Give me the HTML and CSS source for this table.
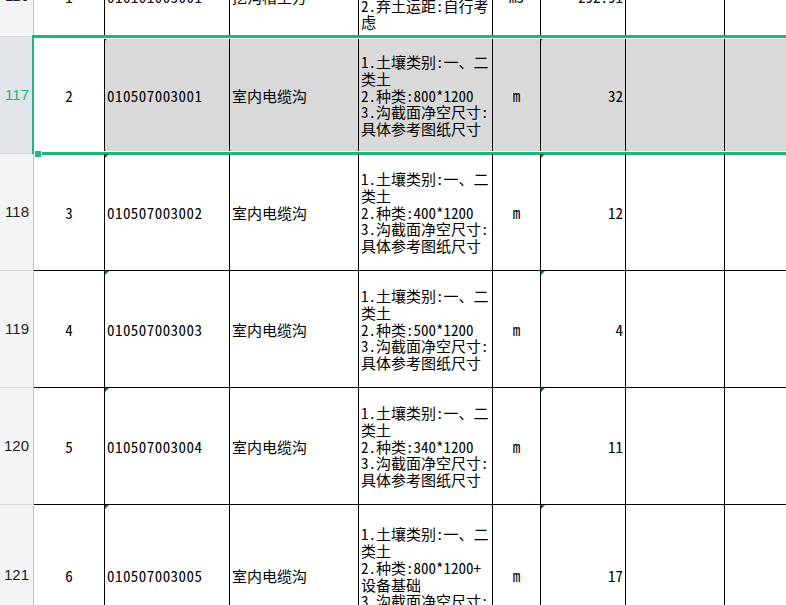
FILE: index.html
```html
<!DOCTYPE html>
<html lang="zh">
<head>
<meta charset="utf-8">
<title>Sheet</title>
<link rel="stylesheet" href="styles.css">
</head>
<body>
<div class="sheet">
  <div class="row r116">
    <div class="rh">116</div>
    <div class="c ca">1</div>
    <div class="c cb tri">010101003001</div>
    <div class="c cc">挖沟槽土方</div>
    <div class="c cd">1.挖土深度:详见图<br>纸<br>2.弃土运距:自行考<br>虑</div>
    <div class="c ce">m3</div>
    <div class="c cf tri">292.91</div>
    <div class="c"></div>
    <div class="c"></div>
  </div>
  <div class="row sel">
    <div class="rh">117</div>
    <div class="c ca">2</div>
    <div class="c cb tri">010507003001</div>
    <div class="c cc">室内电缆沟</div>
    <div class="c cd">1.土壤类别:一、二<br>类土<br>2.种类:800*1200<br>3.沟截面净空尺寸:<br>具体参考图纸尺寸</div>
    <div class="c ce">m</div>
    <div class="c cf tri">32</div>
    <div class="c"></div>
    <div class="c"></div>
    <div class="selbox"></div>
    <div class="handle"></div>
  </div>
  <div class="row">
    <div class="rh">118</div>
    <div class="c ca">3</div>
    <div class="c cb tri">010507003002</div>
    <div class="c cc">室内电缆沟</div>
    <div class="c cd">1.土壤类别:一、二<br>类土<br>2.种类:400*1200<br>3.沟截面净空尺寸:<br>具体参考图纸尺寸</div>
    <div class="c ce">m</div>
    <div class="c cf tri">12</div>
    <div class="c"></div>
    <div class="c"></div>
  </div>
  <div class="row">
    <div class="rh">119</div>
    <div class="c ca">4</div>
    <div class="c cb tri">010507003003</div>
    <div class="c cc">室内电缆沟</div>
    <div class="c cd">1.土壤类别:一、二<br>类土<br>2.种类:500*1200<br>3.沟截面净空尺寸:<br>具体参考图纸尺寸</div>
    <div class="c ce">m</div>
    <div class="c cf tri">4</div>
    <div class="c"></div>
    <div class="c"></div>
  </div>
  <div class="row">
    <div class="rh">120</div>
    <div class="c ca">5</div>
    <div class="c cb tri">010507003004</div>
    <div class="c cc">室内电缆沟</div>
    <div class="c cd">1.土壤类别:一、二<br>类土<br>2.种类:340*1200<br>3.沟截面净空尺寸:<br>具体参考图纸尺寸</div>
    <div class="c ce">m</div>
    <div class="c cf tri">11</div>
    <div class="c"></div>
    <div class="c"></div>
  </div>
  <div class="row r121">
    <div class="rh">121</div>
    <div class="c ca">6</div>
    <div class="c cb tri">010507003005</div>
    <div class="c cc">室内电缆沟</div>
    <div class="c cd">1.土壤类别:一、二<br>类土<br>2.种类:800*1200+<br>设备基础<br>3.沟截面净空尺寸:<br>具体参考图纸尺寸</div>
    <div class="c ce">m</div>
    <div class="c cf tri">17</div>
    <div class="c"></div>
    <div class="c"></div>
  </div>
</div>
</body>
</html>
```

FILE: styles.css
```css
html, body {
  margin: 0;
  padding: 0;
  background: #ffffff;
  overflow: hidden;
  width: 786px;
  height: 605px;
}

.sheet {
  margin-top: -43px;
  width: 825px;
}

.row {
  position: relative;
  display: grid;
  grid-template-columns: 34px 71px 125px 129px 134px 48px 85px 99px 100px;
  height: 117px;
  font-family: "Noto Sans Mono CJK SC", "Noto Sans CJK SC", "Liberation Mono", monospace;
  font-size: 15px;
  line-height: 16.7px;
  color: #000;
}

.r116 { height: 80px; }
.r121 { height: 142px; }

.rh {
  box-sizing: border-box;
  display: flex;
  align-items: center;
  justify-content: flex-end;
  padding-right: 4px;
  padding-top: 0;
  background: #f3f4f6;
  border-right: 1px solid #b9c0cd;
  border-bottom: 1px solid #d6d9df;
  font-family: "Liberation Sans", Arial, sans-serif;
  font-size: 15px;
  color: #1c1c28;
}

.c {
  position: relative;
  box-sizing: border-box;
  display: flex;
  align-items: center;
  padding: 2px 2px 0 2px;
  border-right: 1px solid #000;
  border-bottom: 1px solid #000;
  overflow: hidden;
  white-space: nowrap;
}

.ca { justify-content: center; }
.cb { letter-spacing: 0.45px; }
.ce { justify-content: center; }
.cf { justify-content: flex-end; }

.tri::before {
  content: "";
  position: absolute;
  left: 0;
  top: 0;
  width: 0;
  height: 0;
  border-top: 4px solid #0f7d1c;
  border-right: 4px solid transparent;
}

.sel .rh {
  background: #e1e4e9;
  color: #1fb37a;
}

.sel .c { background: #d9d9d9; }
.sel .ca { background: #ffffff; }

.selbox {
  position: absolute;
  left: 32px;
  top: -2px;
  right: 0;
  height: 120px;
  box-sizing: border-box;
  border: 3px solid #21b47b;
  border-left-width: 2px;
  border-right: none;
  box-shadow: inset 0 1px 0 #fff, inset 0 -1px 0 #fff, inset 1px 0 0 #fff;
  pointer-events: none;
}

.handle {
  position: absolute;
  left: 34px;
  top: 113px;
  width: 6px;
  height: 6px;
  background: #21b47b;
  border: 1px solid #fff;
}
```
